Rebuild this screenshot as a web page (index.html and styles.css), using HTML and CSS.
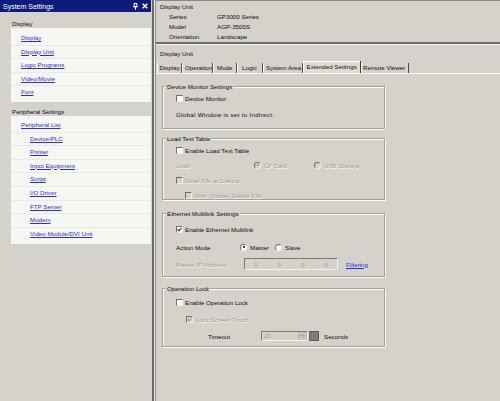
FILE: index.html
```html
<!DOCTYPE html>
<html lang="en">
<head>
<meta charset="utf-8">
<title>System Settings</title>
<link rel="stylesheet" href="styles.css">
</head>
<body>
<aside class="sidebar">
  <div class="titlebar">
    <span class="title">System Settings</span>
    <span class="tb-icons">
      <svg class="pin" viewBox="0 0 5 7" width="5" height="7"><rect x="1.2" y="0.5" width="2.6" height="3" fill="none" stroke="#fff" stroke-width="1"/><line x1="0" y1="3.8" x2="5" y2="3.8" stroke="#fff" stroke-width="1"/><line x1="2.5" y1="4" x2="2.5" y2="7" stroke="#fff" stroke-width="1"/></svg>
      <svg class="close" viewBox="0 0 6 6" width="6" height="6"><path d="M0.7 0.7 L5.3 5.3 M5.3 0.7 L0.7 5.3" stroke="#fff" stroke-width="1.5"/></svg>
    </span>
  </div>
  <div class="sec-head">Display</div>
  <ul class="linkbox">
    <li><a href="#">Display</a></li>
    <li><a href="#">Display Unit</a></li>
    <li><a href="#">Logic Programs</a></li>
    <li><a href="#">Video/Movie</a></li>
    <li><a href="#">Font</a></li>
  </ul>
  <div class="sec-head sec-head-2">Peripheral Settings</div>
  <ul class="linkbox peri">
    <li><a href="#">Peripheral List</a></li>
    <li class="sub"><a href="#">Device/PLC</a></li>
    <li class="sub"><a href="#">Printer</a></li>
    <li class="sub"><a href="#">Input Equipment</a></li>
    <li class="sub"><a href="#">Script</a></li>
    <li class="sub"><a href="#">I/O Driver</a></li>
    <li class="sub"><a href="#">FTP Server</a></li>
    <li class="sub"><a href="#">Modem</a></li>
    <li class="sub"><a href="#">Video Module/DVI Unit</a></li>
  </ul>
</aside>
<div class="splitter"></div>
<main class="main">
  <section class="info">
    <div class="info-title">Display Unit</div>
    <dl class="info-grid">
      <dt>Series</dt><dd>GP3000 Series</dd>
      <dt>Model</dt><dd>AGP-3500S</dd>
      <dt>Orientation</dt><dd>Landscape</dd>
    </dl>
  </section>
  <section class="settings">
    <div class="set-title">Display Unit</div>
    <div class="tabs">
      <span class="tab t-display">Display</span>
      <span class="tab t-operation">Operation</span>
      <span class="tab t-mode">Mode</span>
      <span class="tab t-logic">Logic</span>
      <span class="tab t-system">System Area</span>
      <span class="tab t-extended active">Extended Settings</span>
      <span class="tab t-remote">Remote Viewer</span>
    </div>
    <div class="tab-body">
      <div class="group g1">
        <div class="legend">Device Monitor Settings</div>
        <div class="row mt2"><span class="cb"></span>Device Monitor</div>
        <div class="row mt6 note">Global Window is set to Indirect.</div>
      </div>

      <div class="group g2">
        <div class="legend">Load Text Table</div>
        <div class="row mt2"><span class="cb"></span>Enable Load Text Table</div>
        <div class="row mt5 dis-text">
          <span class="lbl-load">Load</span>
          <span class="opt-cf"><span class="rb on dis"></span>CF Card</span>
          <span class="opt"><span class="rb dis"></span>USB Storage</span>
        </div>
        <div class="row mt5 dis-text"><span class="cb dis"></span>Read File at Startup</div>
        <div class="row mt5 indent dis-text"><span class="cb dis"></span>After Update, Delete File</div>
      </div>

      <div class="group g3">
        <div class="legend">Ethernet Multilink Settings</div>
        <div class="row mt6"><span class="cb"><svg viewBox="0 0 5 5" width="5" height="5"><path d="M0.6 2.3 L2 3.8 L4.4 1" fill="none" stroke="#111" stroke-width="1.1"/></svg></span>Enable Ethernet Multilink</div>
        <div class="row mt8">
          <span class="lbl-action">Action Mode</span>
          <span class="opt-master"><span class="rb on"></span>Master</span>
          <span class="opt"><span class="rb"></span>Slave</span>
        </div>
        <div class="row mt7">
          <span class="lbl-ip dis-text">Master IP Address</span>
          <span class="ipbox">
            <span class="oct">0</span><span class="dot">.</span>
            <span class="oct">0</span><span class="dot">.</span>
            <span class="oct">0</span><span class="dot">.</span>
            <span class="oct">0</span>
          </span>
          <a href="#" class="filter">Filtering</a>
        </div>
      </div>

      <div class="group g4">
        <div class="legend">Operation Lock</div>
        <div class="row mt4"><span class="cb"></span>Enable Operation Lock</div>
        <div class="row mt7 indent2 dis-text"><span class="cb dis"><svg viewBox="0 0 5 5" width="5" height="5"><path d="M0.6 2.3 L2 3.8 L4.4 1" fill="none" stroke="#9a978f" stroke-width="1.1"/></svg></span>Lock Screen Touch</div>
        <div class="row mt7 timeout">
          <span class="lbl-timeout">Timeout</span>
          <span class="spin">
            <span class="spin-input">20</span>
            <svg class="spin-btns" viewBox="0 0 9 10" width="9" height="10">
              <rect x="0" y="0" width="9" height="5" fill="#d5d2cc" stroke="#8a8882" stroke-width="0.6"/>
              <rect x="0" y="5" width="9" height="5" fill="#d5d2cc" stroke="#8a8882" stroke-width="0.6"/>
              <path d="M3 3.4 L4.5 1.8 L6 3.4 Z" fill="#8a8882"/>
              <path d="M3 6.6 L4.5 8.2 L6 6.6 Z" fill="#8a8882"/>
            </svg>
          </span>
          <span class="keypad"></span>
          <span class="secs">Seconds</span>
        </div>
      </div>
    </div>
  </section>
</main>
</body>
</html>
```

FILE: styles.css
```css
* {
  box-sizing: border-box;
  margin: 0;
  padding: 0;
}

html, body {
  width: 500px;
  height: 401px;
  overflow: hidden;
}

body {
  display: flex;
  font-family: "Liberation Sans", Arial, sans-serif;
  font-size: 6.2px;
  color: #0c0c0c;
  background: #d5d2cc;
}

a {
  color: #2b2be6;
  text-decoration: underline;
}

/* ---------- Sidebar ---------- */
.sidebar {
  width: 152px;
  flex: none;
  display: flex;
  flex-direction: column;
}

.titlebar {
  width: 151px;
  height: 12px;
  background: #0e1a7c;
  color: #fff;
  display: flex;
  align-items: center;
  justify-content: space-between;
  padding: 0 3px;
  font-size: 7px;
}

.tb-icons {
  display: flex;
  align-items: center;
  gap: 4px;
}

.tb-icons svg {
  display: block;
}

.sec-head {
  height: 9px;
  line-height: 9px;
  margin-top: 7px;
  padding-left: 12px;
}

.sec-head-2 {
  margin-top: 5px;
}

.linkbox {
  list-style: none;
  margin-left: 11px;
  width: 140px;
  background: #f6f6f3;
  padding: 3px 0;
}

.linkbox.peri {
  padding: 2px 0 3.6px;
}

.linkbox li {
  height: 13.6px;
  line-height: 13.6px;
  padding-left: 10px;
}

.linkbox li + li {
  box-shadow: inset 0 1px 0 #eaeae5;
}

.linkbox li.sub {
  padding-left: 19px;
}

/* ---------- Splitter ---------- */
.splitter {
  width: 4px;
  flex: none;
  background: linear-gradient(to right, #6b6a66 0 2px, #eeede9 2px 3px, #8e8c87 3px 4px);
}

/* ---------- Main ---------- */
.main {
  flex: 1;
  display: flex;
  flex-direction: column;
  border-top: 1px solid #8a8883;
}

.info {
  height: 43px;
  padding: 1px 0 0 4px;
  border-bottom: 2px solid #6d6c68;
}

.info-title {
  line-height: 10px;
}

.info-grid {
  display: grid;
  grid-template-columns: 48px auto;
  padding-left: 9px;
  line-height: 10px;
}

.settings {
  flex: 1;
  border-top: 1px solid #f4f3f0;
  padding-top: 4px;
}

.set-title {
  height: 9px;
  line-height: 9px;
  padding-left: 4px;
}

.tabs {
  display: flex;
  align-items: flex-end;
  height: 15px;
  padding-left: 1px;
}

.tab {
  flex: none;
  height: 10px;
  line-height: 10px;
  padding-left: 2.5px;
  border-right: 1px solid #4e4d4a;
  box-shadow: inset 1px 0 0 #fbfbfa;
  white-space: nowrap;
  overflow: hidden;
}

.t-display { width: 25px; }
.t-operation { width: 31px; padding-left: 3px; }
.t-mode { width: 24px; padding-left: 4px; }
.t-logic { width: 26px; padding-left: 5px; }
.t-system { width: 40px; padding-left: 3px; }
.t-extended { width: 58px; }
.t-remote { width: 48px; padding-left: 2px; }

.tab.active {
  height: 12px;
  line-height: 11px;
  padding-left: 3.5px;
  background: #dfdcd6;
  border-right-color: #383734;
  box-shadow: inset 1px 1px 0 #fff;
}

.tab-body {
  border-top: 1px solid #fbfbfa;
  padding-top: 12px;
}

/* ---------- Group boxes ---------- */
.group {
  margin-left: 6px;
  width: 223px;
  border: 1px solid #a3a099;
  box-shadow: inset 1px 1px 0 #fbfbf9, 1px 1px 0 #fbfbf9;
}

.g1 { height: 43px; }
.g2 { height: 62px; margin-top: 9px; }
.g3 { height: 64px; margin-top: 13px; }
.g4 { height: 59px; margin-top: 11px; }

.legend {
  width: max-content;
  height: 8px;
  line-height: 8px;
  margin: -4px 0 0 3px;
  padding: 0 1px;
  background: #d5d2cc;
}

.row {
  display: flex;
  align-items: center;
  height: 10px;
  padding-left: 13px;
  white-space: nowrap;
}

.note {
  letter-spacing: 0.3px;
}

.mt2 { margin-top: 2px; }
.mt4 { margin-top: 4px; }
.mt5 { margin-top: 5px; }
.mt6 { margin-top: 6px; }
.mt7 { margin-top: 7px; }
.mt8 { margin-top: 8px; }

.indent { padding-left: 22px; }
.indent2 { padding-left: 23px; }

.dis-text {
  color: #9e9b95;
  text-shadow: 0.5px 0.5px 0 #fbfbf9;
}

/* checkbox */
.cb {
  width: 7px;
  height: 7px;
  flex: none;
  margin-right: 2px;
  display: grid;
  place-items: center;
  background: #fff;
  border: 1px solid;
  border-color: #6f6e6a #eeede9 #eeede9 #6f6e6a;
}

.indent2 .cb {
  margin-right: 3px;
}

.cb.dis {
  background: #d5d2cc;
}

.cb svg {
  display: block;
}

/* radio */
.rb {
  width: 7px;
  height: 7px;
  flex: none;
  margin-right: 3px;
  border-radius: 50%;
  display: grid;
  place-items: center;
  background: #fff;
  border: 1px solid;
  border-color: #6f6e6a #eeede9 #eeede9 #6f6e6a;
}

.rb.on::after {
  content: "";
  width: 2px;
  height: 2px;
  border-radius: 50%;
  background: #111;
}

.rb.dis {
  background: #d5d2cc;
}

.rb.dis.on::after {
  background: #9a978f;
}

.opt, .opt-cf, .opt-master {
  display: flex;
  align-items: center;
}

.lbl-load { width: 78px; }
.opt-cf { width: 60px; }
.lbl-action { width: 64px; }
.opt-master { width: 35px; }
.lbl-ip { width: 68px; }
.lbl-timeout { width: 53px; }

.timeout {
  padding-left: 45px;
}

/* IP address box */
.ipbox {
  width: 94px;
  height: 12px;
  flex: none;
  display: flex;
  align-items: center;
  border: 1px solid;
  border-color: #7b7a76 #f4f3f0 #f4f3f0 #7b7a76;
  color: #9e9b95;
}

.oct {
  width: 21.5px;
  text-align: center;
}

.dot {
  width: 2px;
  align-self: flex-end;
  line-height: 7px;
  text-align: center;
}

.filter {
  margin-left: 8px;
}

/* spinner */
.spin {
  display: flex;
  height: 10px;
  flex: none;
  border: 1px solid;
  border-color: #7b7a76 #f4f3f0 #f4f3f0 #7b7a76;
}

.spin-input {
  width: 36px;
  line-height: 8px;
  padding-left: 2px;
  color: #9e9b95;
}

.spin-btns {
  display: block;
  width: 9px;
  height: 8px;
}

.keypad {
  width: 10px;
  height: 10px;
  flex: none;
  margin-left: 1px;
  border: 1px solid #5e5d59;
  background: repeating-linear-gradient(to right, #8c8a85 0 1px, #6f6e6a 1px 2px);
}

.secs {
  margin-left: 5px;
}
```
